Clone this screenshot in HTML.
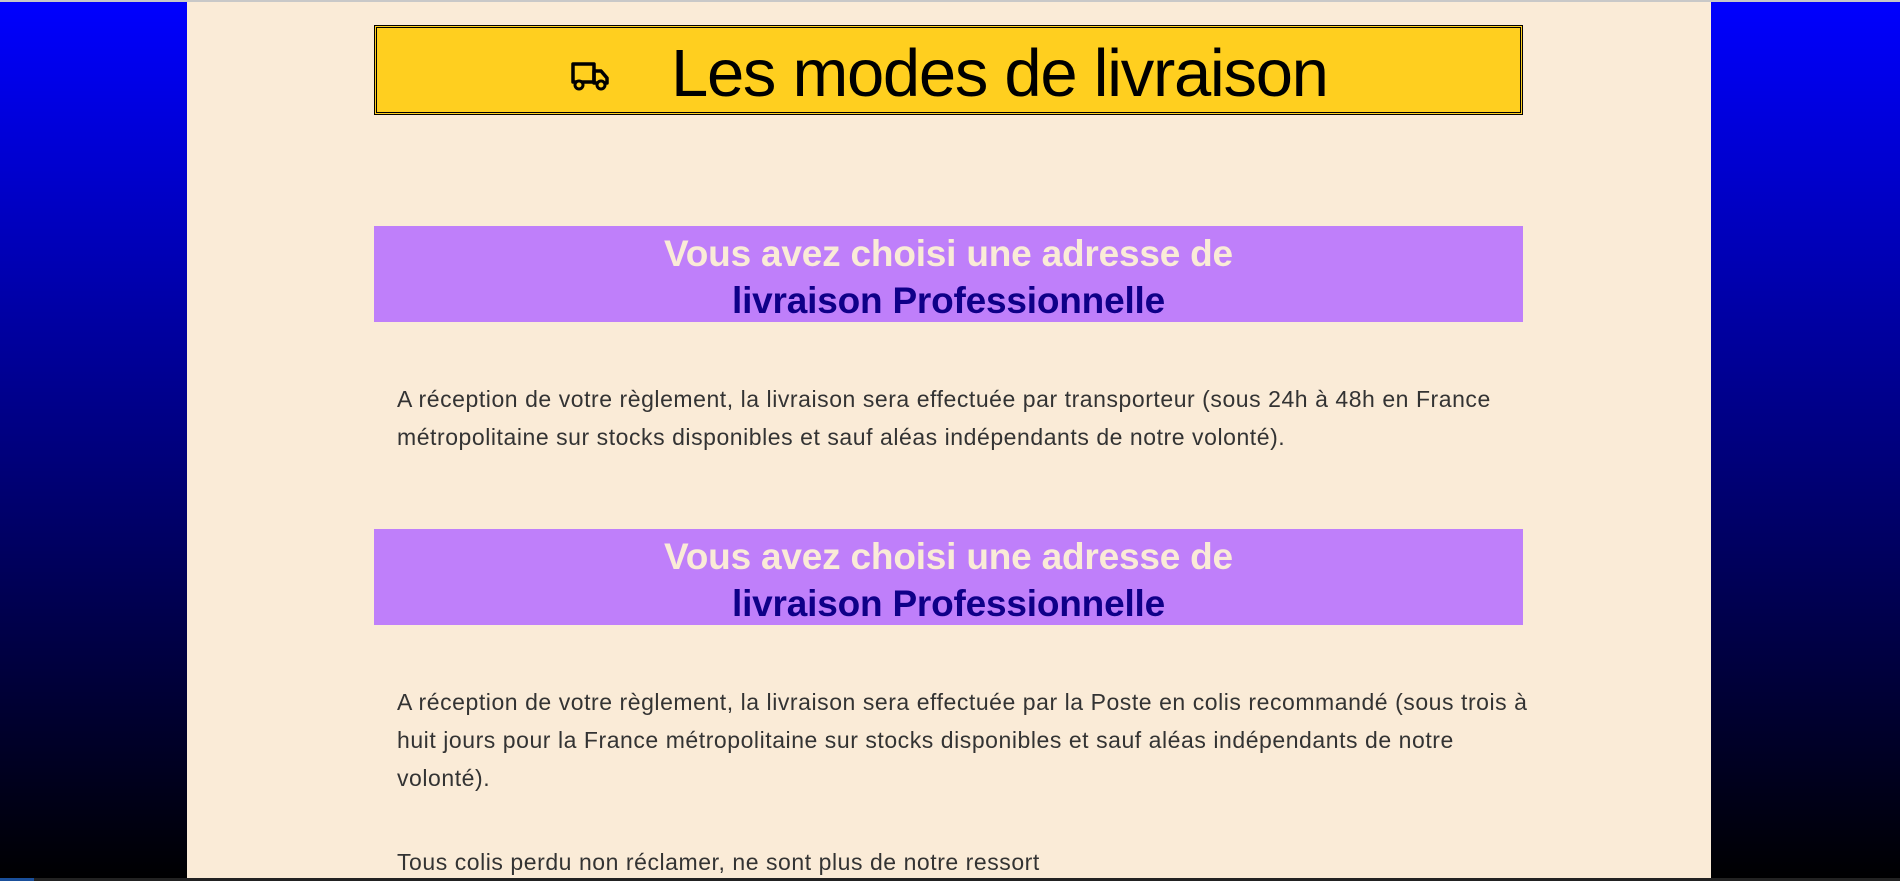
<!DOCTYPE html>
<html><head><meta charset="utf-8"><style>
html,body{margin:0;padding:0;width:1900px;height:881px;overflow:hidden}
body{background:linear-gradient(#0000ff 0px,#000000 881px);position:relative;font-family:"Liberation Sans",sans-serif}
.top{position:absolute;left:0;top:0;width:1900px;height:2px;background:#c8c8c8}
.bot{position:absolute;left:0;top:878px;width:1900px;height:3px;background:#222}
.bot2{position:absolute;left:0;top:878px;width:34px;height:3px;background:#1a4f9a}
.panel{position:absolute;left:187px;top:2px;width:1524px;height:876px;background:#faebd7}
.title{position:absolute;left:374px;top:25px;width:1143px;height:84px;border:3px double #000;background:#ffcf1f}
.title span{position:absolute;left:294px;top:4px;font-size:67px;line-height:84px;color:#000;letter-spacing:-1.3px;white-space:nowrap}
.title svg{position:absolute;left:193px;top:33px}
.bar{position:absolute;left:374px;width:1149px;height:92px;padding-top:4px;background:#bf7ffa;text-align:center;font-weight:bold;font-size:37px;line-height:47px;letter-spacing:-0.2px}
.bar .a{color:#faebd7}.bar .b{color:#0f0088}
p{position:absolute;left:397px;margin:0;font-size:23px;line-height:38px;color:#333;white-space:nowrap;letter-spacing:0.55px}
</style></head><body>
<div class="top"></div>
<div class="panel"></div>
<div class="title"><svg width="40" height="30" viewBox="0 0 40 30"><path d="M3 3h21v18H3z" fill="none" stroke="#000" stroke-width="3.5" stroke-linejoin="round"/><path d="M24 10h7l6 7v5h-13z" fill="none" stroke="#000" stroke-width="3.5" stroke-linejoin="round"/><circle cx="9" cy="24" r="4" fill="#ffcf1f" stroke="#000" stroke-width="3"/><circle cx="31" cy="24" r="4" fill="#ffcf1f" stroke="#000" stroke-width="3"/></svg><span>Les modes de livraison</span></div>
<div class="bar" style="top:226px"><div class="a">Vous avez choisi une adresse de</div><div class="b">livraison Professionnelle</div></div>
<p style="top:380px">A réception de votre règlement, la livraison sera effectuée par transporteur (sous 24h à 48h en France<br>métropolitaine sur stocks disponibles et sauf aléas indépendants de notre volonté).</p>
<div class="bar" style="top:529px"><div class="a">Vous avez choisi une adresse de</div><div class="b">livraison Professionnelle</div></div>
<p style="top:683px">A réception de votre règlement, la livraison sera effectuée par la Poste en colis recommandé (sous trois à<br>huit jours pour la France métropolitaine sur stocks disponibles et sauf aléas indépendants de notre<br>volonté).</p>
<p style="top:843px">Tous colis perdu non réclamer, ne sont plus de notre ressort</p>
<div class="bot"></div><div class="bot2"></div>
</body></html>
